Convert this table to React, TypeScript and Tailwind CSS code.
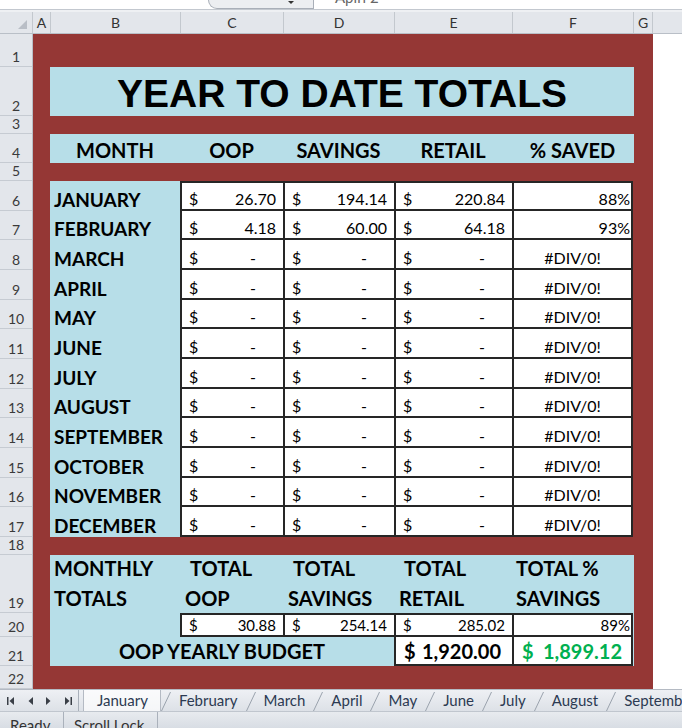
import React from "react";

const BLUE = "bg-[#b7dee8]";

type RowH = { n: string; h: string };
const rowHeads: RowH[] = [
  { n: "1", h: "h-[33px]" },
  { n: "2", h: "h-[49px]" },
  { n: "3", h: "h-[18px]" },
  { n: "4", h: "h-[29px]" },
  { n: "5", h: "h-[18px]" },
  { n: "6", h: "h-[29.67px]" },
  { n: "7", h: "h-[29.67px]" },
  { n: "8", h: "h-[29.67px]" },
  { n: "9", h: "h-[29.67px]" },
  { n: "10", h: "h-[29.67px]" },
  { n: "11", h: "h-[29.67px]" },
  { n: "12", h: "h-[29.67px]" },
  { n: "13", h: "h-[29.67px]" },
  { n: "14", h: "h-[29.67px]" },
  { n: "15", h: "h-[29.67px]" },
  { n: "16", h: "h-[29.67px]" },
  { n: "17", h: "h-[29.67px]" },
  { n: "18", h: "h-[18px]" },
  { n: "19", h: "h-[58px]" },
  { n: "20", h: "h-[24px]" },
  { n: "21", h: "h-[29px]" },
  { n: "22", h: "h-[23px]" },
];

type Month = { name: string; oop: string; sav: string; ret: string; pct: string };
const months: Month[] = [
  { name: "JANUARY", oop: "26.70", sav: "194.14", ret: "220.84", pct: "88%" },
  { name: "FEBRUARY", oop: "4.18", sav: "60.00", ret: "64.18", pct: "93%" },
  { name: "MARCH", oop: "-", sav: "-", ret: "-", pct: "#DIV/0!" },
  { name: "APRIL", oop: "-", sav: "-", ret: "-", pct: "#DIV/0!" },
  { name: "MAY", oop: "-", sav: "-", ret: "-", pct: "#DIV/0!" },
  { name: "JUNE", oop: "-", sav: "-", ret: "-", pct: "#DIV/0!" },
  { name: "JULY", oop: "-", sav: "-", ret: "-", pct: "#DIV/0!" },
  { name: "AUGUST", oop: "-", sav: "-", ret: "-", pct: "#DIV/0!" },
  { name: "SEPTEMBER", oop: "-", sav: "-", ret: "-", pct: "#DIV/0!" },
  { name: "OCTOBER", oop: "-", sav: "-", ret: "-", pct: "#DIV/0!" },
  { name: "NOVEMBER", oop: "-", sav: "-", ret: "-", pct: "#DIV/0!" },
  { name: "DECEMBER", oop: "-", sav: "-", ret: "-", pct: "#DIV/0!" },
];

function Money({ v }: { v: string }) {
  return (
    <div className="flex h-full items-end justify-between pl-[7px] pr-[7px] pb-[2px] text-[16px] leading-none text-black">
      <span>$</span>
      <span className={v === "-" ? "pr-[20px]" : ""}>{v}</span>
    </div>
  );
}

function DataRow({ m, first }: { m: Month; first: boolean }) {
  const top = first ? "border-t-2" : "";
  return (
    <div className="flex h-[29.67px]">
      <div className={`w-[130px] ${BLUE} flex items-end pl-[4px] pb-[2px] text-[19px] font-bold leading-none text-black`}>
        {m.name}
      </div>
      <div className={`w-[103px] bg-white border-l-2 border-b-2 border-[#262626] ${top}`}>
        <Money v={m.oop} />
      </div>
      <div className={`w-[111px] bg-white border-l-2 border-b-2 border-[#262626] ${top}`}>
        <Money v={m.sav} />
      </div>
      <div className={`w-[118px] bg-white border-l-2 border-b-2 border-[#262626] ${top}`}>
        <Money v={m.ret} />
      </div>
      <div
        className={`w-[121px] bg-white border-l-2 border-r-2 border-b-2 border-[#262626] ${top} flex items-end pb-[2px] text-[16px] leading-none text-black ${
          m.pct.startsWith("#") ? "justify-center" : "justify-end pr-[1px]"
        }`}
      >
        {m.pct}
      </div>
    </div>
  );
}

function NavIcons() {
  return (
    <div className="flex w-[78px] h-full items-center shrink-0">
      <svg width="78" height="22" viewBox="0 0 78 22">
        <g fill="#3a3f47">
          <rect x="7" y="7" width="1.5" height="8" />
          <path d="M14 7 L9.5 11 L14 15 Z" />
          <path d="M33 7 L28.5 11 L33 15 Z" />
          <path d="M46 7 L50.5 11 L46 15 Z" />
          <path d="M65 7 L69.5 11 L65 15 Z" />
          <rect x="70.5" y="7" width="1.5" height="8" />
        </g>
      </svg>
    </div>
  );
}

function Slash() {
  return (
    <svg width="10" height="22" viewBox="0 0 10 22" className="shrink-0">
      <path d="M0.5 21 L9.5 2" stroke="#9aa2ad" strokeWidth="1" fill="none" />
    </svg>
  );
}

const tabs = ["February", "March", "April", "May", "June", "July", "August", "September"];

export default function App() {
  return (
    <div className="w-[682px] h-[728px] overflow-hidden bg-white flex flex-col font-['Lato',sans-serif]">
      {/* formula bar remnant */}
      <div className="h-[9px] shrink-0 flex items-start overflow-hidden bg-white">
        <div className="w-[208px] shrink-0" />
        <div className="w-[106px] h-[9px] shrink-0 border border-t-0 border-[#a9afb8] rounded-bl-[9px] bg-[#eceef1] flex justify-end items-start pr-[19px]">
          <div className="w-0 h-0 border-l-[3px] border-r-[3px] border-t-[3px] border-l-transparent border-r-transparent border-t-[#333] mt-[1px]" />
        </div>
        <div className="ml-[21px] -mt-[14px] text-[15px] text-[#666] whitespace-nowrap">Apirl 2</div>
      </div>
      <div className="h-px shrink-0 bg-[#c3c8cf]" />
      <div className="h-[2px] shrink-0 bg-[#eef0f3]" />

      {/* column headers */}
      <div className="h-[22px] shrink-0 flex bg-[#e3e6eb] border-b border-[#b9bfc7] text-[14px] leading-none text-[#333]">
        <div className="w-[33px] border-r border-[#c3c8ce] flex items-end justify-end pr-[5px] pb-[4px]">
          <svg width="9" height="9" viewBox="0 0 9 9">
            <path d="M9 0 L9 9 L0 9 Z" fill="#b9bec6" />
          </svg>
        </div>
        <div className="w-[18px] border-r border-[#c3c8ce] flex items-center justify-center">A</div>
        <div className="w-[130px] border-r border-[#c3c8ce] flex items-center justify-center">B</div>
        <div className="w-[103px] border-r border-[#c3c8ce] flex items-center justify-center">C</div>
        <div className="w-[111px] border-r border-[#c3c8ce] flex items-center justify-center">D</div>
        <div className="w-[118px] border-r border-[#c3c8ce] flex items-center justify-center">E</div>
        <div className="w-[121px] border-r border-[#c3c8ce] flex items-center justify-center">F</div>
        <div className="w-[19px] border-r border-[#c3c8ce] flex items-center justify-center">G</div>
        <div className="flex-1" />
      </div>

      {/* body */}
      <div className="h-[655px] shrink-0 flex">
        {/* row headers */}
        <div className="w-[33px] shrink-0 flex flex-col bg-[#e3e6eb] border-r border-[#b9bfc7]">
          {rowHeads.map((r) => (
            <div
              key={r.n}
              className={`${r.h} shrink-0 border-b border-[#c6cbd2] flex items-end justify-center pb-[2px] text-[14px] leading-none text-[#3a3a3a] overflow-hidden`}
            >
              {r.n}
            </div>
          ))}
        </div>

        {/* sheet */}
        <div className="w-[620px] shrink-0 bg-[#953735] flex flex-col pl-[17px] pr-[19px]">
          <div className="h-[33px] shrink-0" />
          <div className={`h-[49px] shrink-0 ${BLUE} flex items-end justify-center pb-[3px]`}>
            <span className="font-['Liberation_Sans',Arial,sans-serif] font-bold text-[39px] leading-none text-black">
              YEAR TO DATE TOTALS
            </span>
          </div>
          <div className="h-[18px] shrink-0" />
          <div className={`h-[29px] shrink-0 ${BLUE} flex text-[20px] font-bold leading-none text-black`}>
            <div className="w-[130px] flex items-end justify-center pb-[3px]">MONTH</div>
            <div className="w-[103px] flex items-end justify-center pb-[3px]">OOP</div>
            <div className="w-[111px] flex items-end justify-center pb-[3px]">SAVINGS</div>
            <div className="w-[118px] flex items-end justify-center pb-[3px]">RETAIL</div>
            <div className="w-[121px] flex items-end justify-center pb-[3px]">% SAVED</div>
          </div>
          <div className="h-[18px] shrink-0" />
          <div className="flex flex-col shrink-0">
            {months.map((m, i) => (
              <DataRow key={m.name} m={m} first={i === 0} />
            ))}
          </div>
          <div className="h-[18px] shrink-0" />

          {/* totals block */}
          <div className={`shrink-0 ${BLUE} flex flex-col`}>
            <div className="h-[58px] flex text-[20px] font-bold leading-[30px] text-black">
              <div className="w-[130px] flex flex-col justify-end pl-[4px]">
                <span>MONTHLY</span>
                <span>TOTALS</span>
              </div>
              <div className="w-[103px] flex flex-col justify-end">
                <span className="pl-[10px]">TOTAL</span>
                <span className="pl-[5px]">OOP</span>
              </div>
              <div className="w-[111px] flex flex-col justify-end">
                <span className="pl-[10px]">TOTAL</span>
                <span className="pl-[5px]">SAVINGS</span>
              </div>
              <div className="w-[118px] flex flex-col justify-end">
                <span className="pl-[10px]">TOTAL</span>
                <span className="pl-[5px]">RETAIL</span>
              </div>
              <div className="w-[121px] flex flex-col justify-end pl-[4px]">
                <span>TOTAL %</span>
                <span>SAVINGS</span>
              </div>
            </div>
            <div className="h-[24px] flex text-[15px] leading-none text-black">
              <div className="w-[130px]" />
              <div className="w-[103px] bg-white border-l-2 border-t-2 border-b-2 border-[#262626] flex items-end justify-between pl-[7px] pr-[7px] pb-[2px]">
                <span>$</span>
                <span>30.88</span>
              </div>
              <div className="w-[111px] bg-white border-l-2 border-t-2 border-b-2 border-[#262626] flex items-end justify-between pl-[7px] pr-[7px] pb-[2px]">
                <span>$</span>
                <span>254.14</span>
              </div>
              <div className="w-[118px] bg-white border-l-2 border-t-2 border-b-2 border-[#262626] flex items-end justify-between pl-[7px] pr-[7px] pb-[2px]">
                <span>$</span>
                <span>285.02</span>
              </div>
              <div className="w-[121px] bg-white border-l-2 border-r-2 border-t-2 border-b-2 border-[#262626] flex items-end justify-end pr-[1px] pb-[2px]">
                89%
              </div>
            </div>
            <div className="h-[29px] flex text-[20px] font-bold leading-none">
              <div className="w-[344px] flex items-end justify-center pb-[5px] text-black">OOP YEARLY BUDGET</div>
              <div className="w-[118px] bg-white border-l-2 border-b-2 border-[#262626] flex items-end justify-between pl-[8px] pr-[11px] pb-[3px] text-black">
                <span>$</span>
                <span>1,920.00</span>
              </div>
              <div className="w-[121px] bg-white border-l-2 border-r-2 border-b-2 border-[#262626] flex items-end justify-between pl-[8px] pr-[9px] pb-[3px] text-[#00b050]">
                <span>$</span>
                <span>1,899.12</span>
              </div>
            </div>
          </div>
          <div className="h-[23px] shrink-0" />
        </div>

        <div className="flex-1 bg-white" />
      </div>

      {/* sheet tabs */}
      <div className="h-[22px] shrink-0 flex items-stretch bg-gradient-to-b from-[#eef0f4] to-[#dde1e7] border-t border-[#b4bac3] text-[15px] leading-none text-[#2c3a52] whitespace-nowrap overflow-hidden">
        <NavIcons />
        <div className="w-px shrink-0 bg-[#a9b0ba]" />
        <div className="w-[4px] shrink-0" />
        <div className="flex items-center shrink-0 bg-white/70 border-l border-r border-[#b4bac3] pl-[13px] pr-[12px]">January</div>
        <Slash />
        {tabs.map((t) => (
          <React.Fragment key={t}>
            <div className="flex items-center shrink-0 px-[8px]">{t}</div>
            <Slash />
          </React.Fragment>
        ))}
      </div>

      {/* status bar */}
      <div className="h-[17px] shrink-0 flex items-start bg-gradient-to-b from-[#e8ebef] to-[#d8dde4] border-t border-[#c0c6ce] text-[15px] leading-none text-[#333] overflow-hidden whitespace-nowrap">
        <div className="pl-[10px] pt-[6px] w-[63px] shrink-0">Ready</div>
        <div className="w-px h-full bg-[#aab1bb]" />
        <div className="pl-[10px] pt-[6px] w-[93px] shrink-0">Scroll Lock</div>
        <div className="w-px h-full bg-[#aab1bb]" />
        <div className="flex-1" />
      </div>
    </div>
  );
}
